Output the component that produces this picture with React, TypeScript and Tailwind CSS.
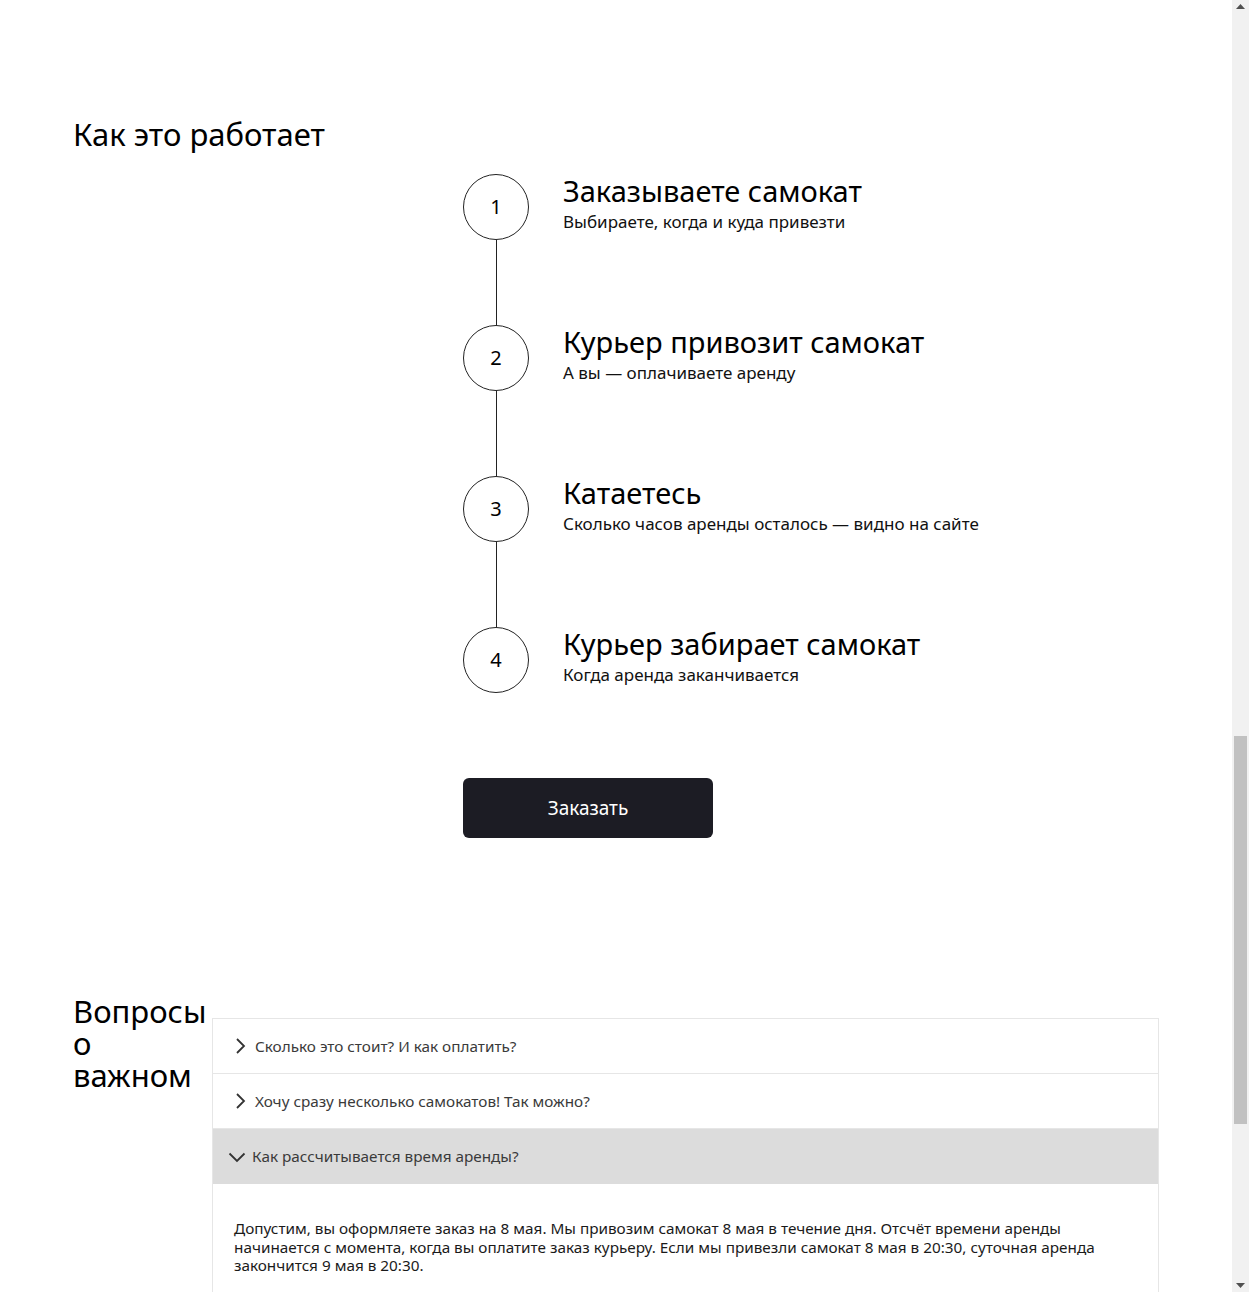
import React from "react";

const steps = [
  { n: "1", title: "Заказываете самокат", sub: "Выбираете, когда и куда привезти" },
  { n: "2", title: "Курьер привозит самокат", sub: "А вы — оплачиваете аренду" },
  { n: "3", title: "Катаетесь", sub: "Сколько часов аренды осталось — видно на сайте" },
  { n: "4", title: "Курьер забирает самокат", sub: "Когда аренда заканчивается" },
];

const faqs = [
  "Сколько это стоит? И как оплатить?",
  "Хочу сразу несколько самокатов! Так можно?",
];

function ChevronRight() {
  return (
    <svg width="12" height="16" viewBox="0 0 12 16" fill="none" className="shrink-0">
      <path d="M3 1 L10 8 L3 15" stroke="#333" strokeWidth="1.8" />
    </svg>
  );
}

function ChevronDown() {
  return (
    <svg width="18" height="12" viewBox="0 0 18 12" fill="none" className="shrink-0">
      <path d="M1.5 2.5 L9 10 L16.5 2.5" stroke="#333" strokeWidth="1.8" />
    </svg>
  );
}

export default function App() {
  return (
    <div className="relative h-[1292px] overflow-hidden bg-white text-black [font-family:'Noto_Sans',sans-serif]">
      <div className="w-[1232px] px-[73px]">
        <section className="pt-[114px]">
          <h2 className="text-[31px] leading-[40px] font-normal text-[#000]">Как это работает</h2>
          <div className="ml-[390px] mt-[20px]">
            {steps.map((s, i) => (
              <div key={s.n} className="flex">
                <div className="flex w-[66px] flex-col items-center">
                  <div className="flex h-[66px] w-[66px] items-center justify-center rounded-full border border-[#222] text-[20px] leading-none">
                    {s.n}
                  </div>
                  {i < steps.length - 1 && <div className="h-[85px] w-px bg-[#222]" />}
                </div>
                <div className="ml-[34px] -mt-[1px]">
                  <div className="text-[29px] leading-[36px]">{s.title}</div>
                  <div className="mt-[3px] text-[17px] leading-[20px] text-[#111]">{s.sub}</div>
                </div>
              </div>
            ))}
            <button className="mt-[85px] flex h-[60px] w-[250px] items-center justify-center rounded-[6px] bg-[#1c1c24] text-[19px] text-white">
              Заказать
            </button>
          </div>
        </section>

        <section className="mt-[157px] flex">
          <h2 className="w-[139px] shrink-0 text-[31px] leading-[32px] font-normal">
            Вопросы
            <br />о
            <br />
            важном
          </h2>
          <div className="mt-[23px] flex-1 border-x border-t border-[#e6e6e6]">
            {faqs.map((q) => (
              <div key={q} className="flex h-[55px] items-center gap-[9px] border-b border-[#e6e6e6] pl-[21px] text-[15.3px] text-[#3a3a3a]">
                <ChevronRight />
                <span>{q}</span>
              </div>
            ))}
            <div className="flex h-[55px] items-center gap-[6px] bg-[#dcdcdc] pl-[15px] text-[15.3px] text-[#3a3a3a]">
              <ChevronDown />
              <span>Как рассчитывается время аренды?</span>
            </div>
            <div className="px-[21px] pt-[35px] pb-[30px] text-[15.3px] leading-[18.5px] text-[#1a1a1a]">
              Допустим, вы оформляете заказ на 8 мая. Мы привозим самокат 8 мая в течение дня. Отсчёт времени аренды
              <br />
              начинается с момента, когда вы оплатите заказ курьеру. Если мы привезли самокат 8 мая в 20:30, суточная аренда
              <br />
              закончится 9 мая в 20:30.
            </div>
          </div>
        </section>
      </div>

      <div className="absolute right-0 top-0 flex h-full w-[17px] flex-col items-center bg-[#f1f1f1]">
        <svg width="9" height="5" viewBox="0 0 9 5" className="mt-[4px]">
          <path d="M0 5 L4.5 0 L9 5 Z" fill="#505050" />
        </svg>
        <div className="absolute left-[2px] top-[736px] h-[388px] w-[13px] bg-[#c1c1c1]" />
        <svg width="9" height="5" viewBox="0 0 9 5" className="absolute bottom-[4px]">
          <path d="M0 0 L4.5 5 L9 0 Z" fill="#505050" />
        </svg>
      </div>
    </div>
  );
}
